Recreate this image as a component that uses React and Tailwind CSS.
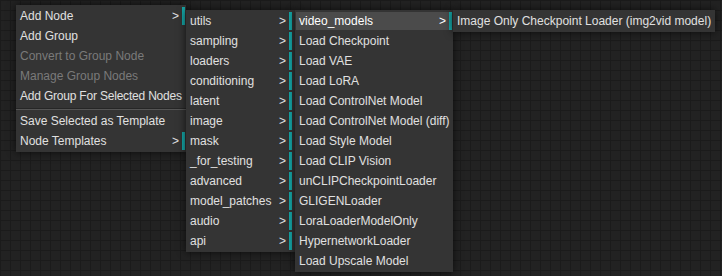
import React from "react";

function Row({ label, sub, disabled, hover, bar = "mr-px", tight }) {
  return (
    <div
      className={`ml-px ${bar} my-px h-[18px] flex items-center justify-between pl-[3px] whitespace-nowrap ${
        sub ? "border-r-[3px] border-[#16a6a6] pr-[3px]" : "pr-1"
      } ${hover ? "bg-[#4b4b4b] text-white" : disabled ? "text-[#7a7a7a]" : "text-[#e0e0e0]"}`}
    >
      <span className={tight ? "tracking-[-0.2px]" : ""}>{label}</span>
      {sub ? <span>&gt;</span> : null}
    </div>
  );
}

function Menu({ className, children }) {
  return (
    <div
      className={`absolute py-px flex flex-col bg-[#343434] shadow-[0_0_8px_rgba(0,0,0,0.7)] ${className}`}
    >
      {children}
    </div>
  );
}

export default function App() {
  const m2 = [
    "utils",
    "sampling",
    "loaders",
    "conditioning",
    "latent",
    "image",
    "mask",
    "_for_testing",
    "advanced",
    "model_patches",
    "audio",
    "api",
  ];
  const m3 = [
    "Load Checkpoint",
    "Load VAE",
    "Load LoRA",
    "Load ControlNet Model",
    "Load ControlNet Model (diff)",
    "Load Style Model",
    "Load CLIP Vision",
    "unCLIPCheckpointLoader",
    "GLIGENLoader",
    "LoraLoaderModelOnly",
    "HypernetworkLoader",
    "Load Upscale Model",
  ];
  return (
    <div
      className="relative w-[722px] h-[276px] overflow-hidden bg-[#222222] bg-[linear-gradient(to_right,#1b1b1b_1px,transparent_1px),linear-gradient(to_bottom,#1b1b1b_1px,transparent_1px)] bg-[size:10px_10px] text-[12px] leading-[18px]"
      style={{ fontFamily: '"Liberation Sans", Arial, sans-serif' }}
    >
      <Menu className="left-[16px] top-[5px] w-[170px]">
        <Row label="Add Node" sub />
        <Row label="Add Group" />
        <Row label="Convert to Group Node" disabled />
        <Row label="Manage Group Nodes" disabled />
        <Row label="Add Group For Selected Nodes" tight />
        <div className="h-[5px] pt-[2px]">
          <div className="h-px bg-[#262626]" />
          <div className="h-px bg-[#555555]" />
        </div>
        <Row label="Save Selected as Template" />
        <Row label="Node Templates" sub />
      </Menu>

      <Menu className="left-[186px] top-[10px] w-[109px]">
        {m2.map((l) => (
          <Row key={l} label={l} sub bar="mr-[3px]" />
        ))}
      </Menu>

      <Menu className="left-[295px] top-[10px] w-[158px]">
        <Row label="video_models" sub hover />
        {m3.map((l) => (
          <Row key={l} label={l} />
        ))}
      </Menu>

      <Menu className="left-[453px] top-[10px] w-[262px]">
        <Row label="Image Only Checkpoint Loader (img2vid model)" />
      </Menu>
    </div>
  );
}
